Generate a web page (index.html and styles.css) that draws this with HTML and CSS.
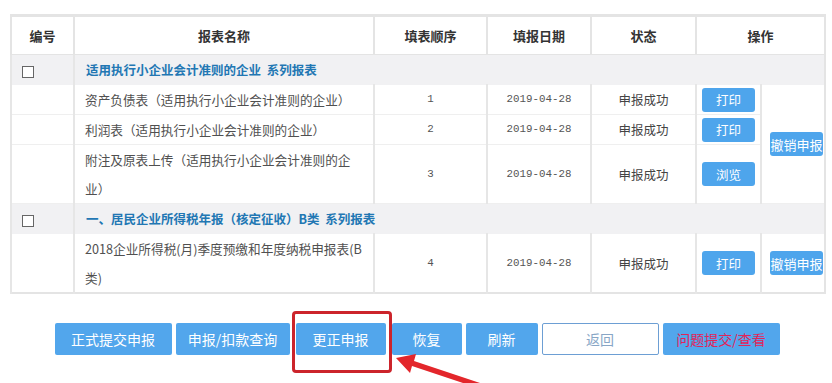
FILE: index.html
```html
<!DOCTYPE html>
<html>
<head>
<meta charset="UTF-8">
<title>申报结果</title>
<link rel="stylesheet" href="styles.css">
</head>
<body>
  <div class="page">
    <table class="grid">
      <colgroup>
        <col class="c-no"><col class="c-name"><col class="c-seq"><col class="c-date"><col class="c-state"><col class="c-op"><col class="c-op2">
      </colgroup>
      <thead>
        <tr>
          <th>编号</th>
          <th>报表名称</th>
          <th>填表顺序</th>
          <th>填报日期</th>
          <th>状态</th>
          <th colspan="2">操作</th>
        </tr>
      </thead>
      <tbody>
        <tr class="group">
          <td class="chk"><span class="box"></span></td>
          <td colspan="6" class="gtitle">适用执行小企业会计准则的企业&nbsp;&nbsp;系列报表</td>
        </tr>
        <tr>
          <td></td>
          <td class="name">资产负债表（适用执行小企业会计准则的企业）</td>
          <td class="num">1</td>
          <td class="num">2019-04-28</td>
          <td class="state">申报成功</td>
          <td class="op"><button class="btn">打印</button></td>
          <td class="op2" rowspan="3"><button class="btn">撤销申报</button></td>
        </tr>
        <tr>
          <td></td>
          <td class="name">利润表（适用执行小企业会计准则的企业）</td>
          <td class="num">2</td>
          <td class="num">2019-04-28</td>
          <td class="state">申报成功</td>
          <td class="op"><button class="btn">打印</button></td>
        </tr>
        <tr>
          <td></td>
          <td class="name">附注及原表上传（适用执行小企业会计准则的企<br>业）</td>
          <td class="num">3</td>
          <td class="num">2019-04-28</td>
          <td class="state">申报成功</td>
          <td class="op"><button class="btn">浏览</button></td>
        </tr>
        <tr class="group">
          <td class="chk"><span class="box"></span></td>
          <td colspan="6" class="gtitle">一、居民企业所得税年报（核定征收）B类&nbsp;&nbsp;系列报表</td>
        </tr>
        <tr>
          <td></td>
          <td class="name">2018企业所得税(月)季度预缴和年度纳税申报表(B<br>类)</td>
          <td class="num">4</td>
          <td class="num">2019-04-28</td>
          <td class="state">申报成功</td>
          <td class="op"><button class="btn">打印</button></td>
          <td class="op2"><button class="btn">撤销申报</button></td>
        </tr>
      </tbody>
    </table>

    <div class="actions">
      <button class="act w117">正式提交申报</button>
      <button class="act w114">申报/扣款查询</button>
      <span class="marked">
        <button class="act w90">更正申报</button>
        <span class="redbox"></span>
      </span>
      <button class="act w70">恢复</button>
      <button class="act w72">刷新</button>
      <button class="act w117 back">返回</button>
      <button class="act w117 issue">问题提交/查看</button>
    </div>

    <svg class="arrow" width="832" height="383" viewBox="0 0 832 383">
      <polygon points="396,358 416,354 414,361 492,387 490,392 412,366 410,373" fill="#e3262b"/>
    </svg>
  </div>
</body>
</html>
```

FILE: styles.css
```css
body {
  margin: 0;
  background: #fff;
  font-family: "Microsoft YaHei", "Noto Sans CJK SC", sans-serif;
  color: #555;
}
.page {
  position: relative;
  height: 383px;
  overflow: hidden;
}
.grid {
  margin: 14px 0 0 10px;
  width: 815px;
  table-layout: fixed;
  border-collapse: collapse;
  border: 2px solid #e4e4e4;
  border-top-width: 3px;
}
.c-no { width: 63px; }
.c-name { width: 300px; }
.c-seq { width: 113px; }
.c-date { width: 104px; }
.c-state { width: 105px; }
.c-op { width: 65px; }
.c-op2 { width: 64px; }

.grid th {
  height: 37px;
  font-size: 13px;
  font-weight: bold;
  color: #333;
  text-align: center;
  border-left: 2px solid #e4e4e4;
  border-bottom: 1px solid #e4e4e4;
  padding: 0;
}
.grid td {
  padding: 0;
  font-size: 12px;
  line-height: 29px;
  height: 28px;
  border-left: 2px solid #e6e6e6;
  border-bottom: 1px solid #efefef;
  text-align: center;
  vertical-align: middle;
}
.grid tr.group td {
  background: #f1f1f3;
  height: 29px;
  border-bottom: 1px solid #f1f1f3;
}
.grid tr.group td.gtitle {
  text-align: left;
  padding-left: 11px;
  font-size: 12.5px;
  font-weight: bold;
  color: #2277b3;
}
.grid tr.group td.chk {
  text-align: left;
  padding-left: 10px;
}
.box {
  display: inline-block;
  width: 10px;
  height: 10px;
  border: 1px solid #666;
  background: #fff;
  vertical-align: middle;
}
.grid td.name {
  text-align: left;
  padding: 0 4px 0 10px;
  font-size: 12.65px;
  color: #505050;
}
.grid td.num {
  font-family: "Liberation Mono", monospace;
  font-size: 10.8px;
  color: #555;
}
.grid td.state {
  font-size: 12.5px;
  color: #444;
}
.grid td.op, .grid td.op2 {
  line-height: normal;
}
.grid td.op2 {
  text-align: right;
  padding-right: 1px;
}
.btn {
  width: 53px;
  height: 24px;
  border: 0;
  border-radius: 3px;
  background: #4ea5ec;
  color: #fff;
  font-family: "Microsoft YaHei", "Noto Sans CJK SC", sans-serif;
  font-size: 12.5px;
  padding: 0;
  white-space: nowrap;
}
.grid td.op2 .btn {
  font-size: 13px;
}

.actions {
  display: flex;
  justify-content: center;
  gap: 4px;
  margin-top: 29px;
  padding-left: 2px;
}
.act {
  height: 32px;
  border: 0;
  border-radius: 2px;
  background: #52a6ec;
  color: #fff;
  font-family: "Microsoft YaHei", "Noto Sans CJK SC", sans-serif;
  font-size: 14px;
  padding: 0;
}
.w117 { width: 117px; }
.w114 { width: 114px; }
.w90 { width: 90px; }
.w70 { width: 70px; }
.w72 { width: 72px; }
.act.back {
  background: #fff;
  border: 1px solid #6d9fd4;
  color: #88a6c6;
}
.act.issue {
  color: #e0245a;
}
.marked {
  position: relative;
  display: flex;
  margin: 0 2px;
}
.redbox {
  position: absolute;
  left: -4px;
  right: -6px;
  top: -12px;
  bottom: -18px;
  border: 3px solid #cc242b;
  border-radius: 4px;
}
.arrow {
  position: absolute;
  left: 0;
  top: 0;
  pointer-events: none;
}
```
